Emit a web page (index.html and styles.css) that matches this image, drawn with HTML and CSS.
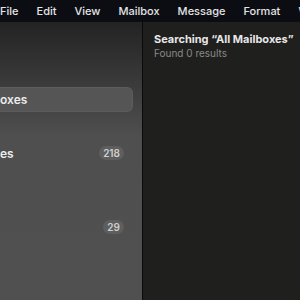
FILE: index.html
```html
<!DOCTYPE html>
<html lang="en">
<head>
  <meta charset="UTF-8" />
  <title>Mail</title>
  <link rel="stylesheet" href="styles.css">
</head>
<body>

  <!-- Menu bar -->
  <div class="menubar">
    <span>File</span>
    <span>Edit</span>
    <span>View</span>
    <span>Mailbox</span>
    <span>Message</span>
    <span>Format</span>
    <span>Window</span>
  </div>

  <div class="window">
    <!-- Sidebar -->
    <div class="sidebar">
      <div class="row selected"><span class="label">oxes</span></div>
      <div class="row second"><span class="label">es</span><span class="badge">218</span></div>
      <div class="row third"><span class="label"></span><span class="badge">29</span></div>
    </div>

    <!-- Results -->
    <div class="results">
      <div class="title">Searching “All Mailboxes”</div>
      <div class="sub">Found 0 results</div>
    </div>
  </div>

</body>
</html>
```

FILE: styles.css
```css
body {
  margin: 0;
  width: 300px;
  height: 300px;
  overflow: hidden;
  font-family: Inter, "Noto Sans", sans-serif;
  background: #1f1f1e;
}

.menubar {
  height: 22px;
  background: #0c0d12;
  color: #e4e4e6;
  font-size: 11px;
  font-weight: 500;
  display: flex;
  align-items: center;
  gap: 18px;
  white-space: nowrap;
  overflow: hidden;
}

.window {
  display: flex;
  height: 278px;
}

.sidebar {
  width: 143px;
  border-right: 1px solid #0a0a0a;
  background: linear-gradient(to bottom, #232323 0px, #4f4f4f 115px, #505050 100%);
  padding-top: 65px;
  box-sizing: border-box;
}

.row {
  display: flex;
  align-items: center;
  justify-content: space-between;
  height: 24px;
  margin-right: 9px;
  padding-right: 9px;
  color: #ececec;
  font-size: 12px;
  font-weight: 600;
}

.selected {
  background: #555555;
  border: 1px solid #5c5c5c;
  border-left: none;
  border-radius: 0 6px 6px 0;
  height: 23px;
}

.second {
  margin-top: 29px;
}

.third {
  margin-top: 50px;
}

.badge {
  background: #5e5e5e;
  color: #cfcfcf;
  font-size: 10px;
  font-weight: 600;
  border-radius: 7px;
  padding: 1px 4px;
  line-height: 12px;
}

.results {
  flex: 1;
  padding: 10px 0 0 11px;
  white-space: nowrap;
  overflow: hidden;
}

.title {
  color: #e8e8e8;
  font-size: 11px;
  font-weight: 700;
  line-height: 15px;
}

.sub {
  color: #8a8a8a;
  font-size: 10px;
  line-height: 13px;
}
```
